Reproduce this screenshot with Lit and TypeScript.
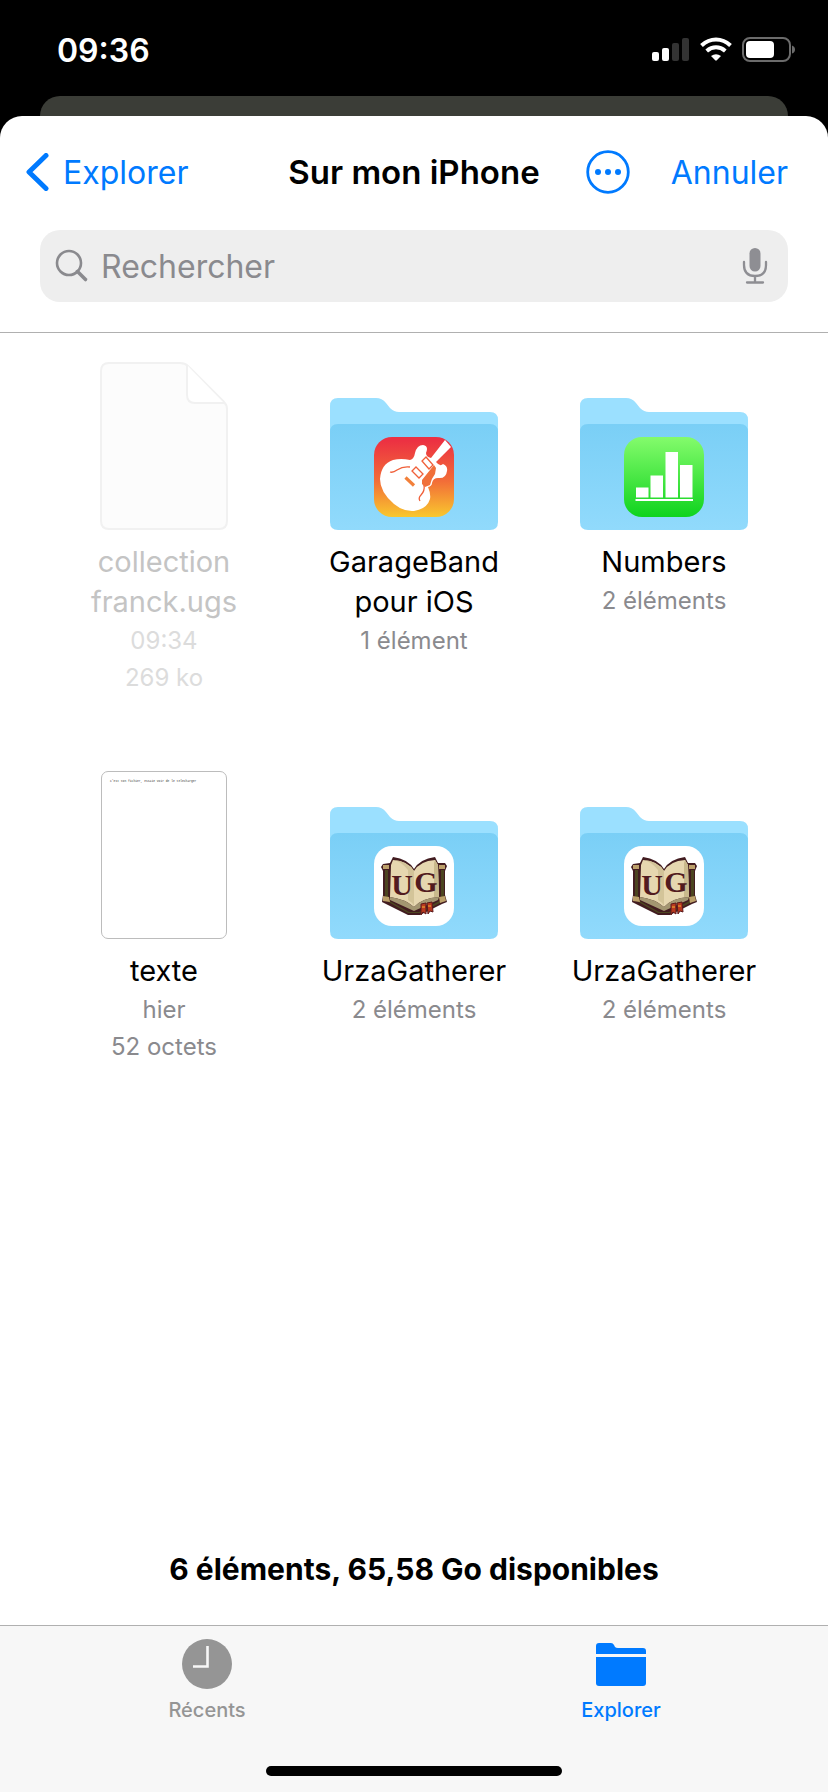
import { LitElement, html, css, svg, nothing } from "lit";
import { customElement } from "lit/decorators.js";

type Art = "document" | "preview" | "garageband" | "numbers" | "urza";

interface Entry {
  name: string;
  details: string[];
  art: Art;
  disabled?: boolean;
}

const entries: Entry[] = [
  { name: "collection franck.ugs", details: ["09:34", "269 ko"], art: "document", disabled: true },
  { name: "GarageBand pour iOS", details: ["1 élément"], art: "garageband" },
  { name: "Numbers", details: ["2 éléments"], art: "numbers" },
  { name: "texte", details: ["hier", "52 octets"], art: "preview" },
  { name: "UrzaGatherer", details: ["2 éléments"], art: "urza" },
  { name: "UrzaGatherer", details: ["2 éléments"], art: "urza" },
];

const garageband = svg`
  <rect width="80" height="80" rx="18" fill="url(#gb)"/>
  <g fill="#fff">
    <path d="M71 3 L77 10 L62 25 Q66 30 69 27 Q74 29 73 34 Q72 42 64 41 Q59 41 58 46 Q58 49 54 50 Q57 57 56 62 Q53 72 40 74 Q30 75 20 67 Q6 55 6 42 Q7 27 19 23 Q27 21 36 23 Q40 22 41 16 Q43 8 49 8 Q55 9 52 16 Q52 20 57 21 Z"/>
  </g>
  <g fill="none" stroke="#f0603a" stroke-width="1.3">
    <path d="M52 20 L59 28 L55 32 L48 24 Z"/>
    <path d="M42 30 L49 37 L45 41 L38 34 Z"/>
    <path d="M16 35 q3 1 7 -2 q6 -4 13 -3"/>
    <path d="M46 64 q-2 -3 1 -6 q4 -4 3 -10"/>
  </g>
  <path d="M60 28 L62 31 L61 37 Q57 42 56 48 L51 50 L48 47 L48 43 Z" fill="#f0703a"/>
  <path d="M31.500 40.500 L40 48.500" stroke="#f2803a" stroke-width="3.200" fill="none"/>`;

const numbers = svg`
  <rect width="80" height="80" rx="18" fill="url(#nb)"/>
  <g fill="#fff">
    <rect x="12" y="50.500" width="12.500" height="10"/>
    <rect x="26.500" y="38.500" width="12.500" height="22"/>
    <rect x="41.500" y="15" width="12.500" height="45.500"/>
    <rect x="56" y="28" width="12.500" height="32.500"/>
    <rect x="11.500" y="62" width="57.500" height="2"/>
  </g>`;

const urza = svg`
  <rect width="80" height="80" rx="18" fill="#fff"/>
  <path d="M9 18 L16 17 L19 11 Q34 13 40 23 Q46 13 61 11 L64 17 L71 17 L73 20 L71 25 L71 49 L73 56 L68 58 L46 69 L34 69 L12 58 L8 56 L9 49 L9 25 L7 21 Z" fill="#421c20"/>
  <path d="M11 24 L14 24 L14 54 L35 66 L45 66 L67 54 L67 24 L70 24 L70 52 L68 56 L46 67 L34 67 L11 54 Z" fill="#4c4520"/>
  <g fill="#bca06a">
    <path d="M9 19 h6 v4 h-6 Z M65 19 h6 v4 h-6 Z"/>
    <path d="M9 50 l6 1 l1 5 l-7 -1 Z M65 51 l6 -1 l1 5 l-6 2 Z"/>
  </g>
  <path d="M16 51 L17 19 L19 14 Q34 15 40 25 Q46 15 61 14 L64 19 L65 51 Q48 52 40 61 Q31 53 16 51 Z" fill="#e6d7b0"/>
  <path d="M19 14 Q34 15 40 25 L40 60 Q38 56 34 54 L34 24 Q27 15 19 14 Z" fill="#d3c499"/>
  <path d="M61 14 L64 19 L65 51 L60 51 L60 17 Z" fill="#c9b98c"/>
  <path d="M16 51 Q31 53 40 61 Q48 52 65 51 L64 54 L40 65 L16 54 Z" fill="#a39671"/>
  <g font-family="Liberation Serif, serif" font-weight="700" font-size="30" fill="#521b20" text-anchor="middle">
    <text x="28" y="49">U</text>
    <text x="52" y="46">G</text>
  </g>
  <path d="M47 58 l5 -1 l0 11 l-3 -2 l-2 3 Z M53 57 l5 -1 l1 10 l-3 -1 l-2 3 Z" fill="#b9391f" stroke="#5b1a1c"/>
  <path d="M48 61 h3 M54 60 h3" stroke="#e08a2c" stroke-width="1.500"/>`;

const appIcons = { garageband, numbers, urza };

const gradients = svg`
  <defs>
    <linearGradient id="front" x1="0" y1="0" x2="0" y2="1">
      <stop offset="0" stop-color="#7acff6"/><stop offset="1" stop-color="#91dafc"/>
    </linearGradient>
    <linearGradient id="gb" x1="0" y1="0" x2="0" y2="1">
      <stop offset="0.050" stop-color="#ec3142"/><stop offset="0.550" stop-color="#f26d38"/><stop offset="1" stop-color="#f9c82e"/>
    </linearGradient>
    <linearGradient id="nb" x1="0" y1="0" x2="0" y2="1">
      <stop offset="0" stop-color="#84fb6c"/><stop offset="1" stop-color="#0fd31e"/>
    </linearGradient>
  </defs>`;

@customElement("file-art")
class FileArt extends LitElement {
  static properties = { art: { type: String } };
  declare art: Art;

  static styles = css`
    :host { display: flex; align-items: flex-end; justify-content: center; height: 168px; }
    svg { display: block; }
    .page {
      box-sizing: border-box; width: 126px; height: 168px; padding: 7px 8px;
      border: 1px solid #bcbcbc; border-radius: 7px; text-align: left; overflow: hidden;
      font: 3px/6px "Liberation Mono", monospace; color: #333; white-space: nowrap;
    }
  `;

  render() {
    if (this.art === "preview") {
      return html`<div class="page">c'est ton fichier, essaie voir de le telecharger</div>`;
    }
    if (this.art === "document") {
      return html`<svg width="128" height="168" viewBox="0 0 128 168" aria-hidden="true">
        <path d="M9 1 H80 Q85 1 88 4 L124 40 Q127 43 127 47 V159 Q127 167 119 167 H9 Q1 167 1 159 V9 Q1 1 9 1 Z"
          fill="#fcfcfc" stroke="#f1f1f1" stroke-width="2"/>
        <path d="M87 3 V33 Q87 41 95 41 H124" fill="#fff" stroke="#f1f1f1" stroke-width="2"/>
      </svg>`;
    }
    return html`<svg width="168" height="132" viewBox="0 0 168 132" aria-hidden="true">
      ${gradients}
      <path d="M8 0 H46 Q52 0 56 5 L60 10 Q64 14 69 14 H160 Q168 14 168 22 V60 H0 V8 Q0 0 8 0 Z" fill="#9be0ff"/>
      <path d="M8 26 H160 Q168 26 168 34 V124 Q168 132 160 132 H8 Q0 132 0 124 V34 Q0 26 8 26 Z" fill="url(#front)"/>
      <g transform="translate(44 39)">${appIcons[this.art] ?? nothing}</g>
    </svg>`;
  }
}

@customElement("app-root")
class AppRoot extends LitElement {
  static styles = css`
    :host {
      display: flex; flex-direction: column; min-height: 100vh; background: #000;
      font-family: Inter, "Liberation Sans", sans-serif; color: #000;
    }
    * { box-sizing: border-box; }
    svg { display: block; flex: none; }
    a { color: #007aff; text-decoration: none; }
    button { border: 0; padding: 0; background: none; font: inherit; color: #007aff; }
    .status {
      display: flex; align-items: center; justify-content: space-between;
      height: 96px; padding: 4px 32px 0 57px; color: #fff;
      font-size: 32px; font-weight: 600;
    }
    .behind { height: 20px; margin: 0 40px; background: #3b3d37; border-radius: 20px 20px 0 0; }
    .sheet {
      flex: 1; display: flex; flex-direction: column;
      background: #fff; border-radius: 22px 22px 0 0; overflow: hidden;
    }
    .top { border-bottom: 1px solid #b0b0b0; padding-bottom: 30px; }
    .nav {
      display: grid; grid-template-columns: 1fr auto 1fr; align-items: center;
      height: 112px; margin-bottom: 2px; padding: 0 26px; font-size: 32px;
    }
    .back { display: flex; align-items: center; gap: 14px; justify-self: start; }
    .title { margin: 0; font-size: 33px; font-weight: 600; }
    .actions { display: flex; align-items: center; justify-content: space-between; padding: 0 14px 0 46px; }
    .search {
      display: flex; align-items: center; gap: 12px; height: 72px;
      margin: 0 40px; padding: 0 20px 0 15px; border-radius: 20px; background: #eeeeee;
    }
    .field {
      flex: 1; min-width: 0; border: 0; padding: 0; outline: 0; background: none;
      font: 32px Inter, "Liberation Sans", sans-serif; color: #000;
    }
    .field::placeholder { color: #8a8a8e; opacity: 1; }
    .field::-webkit-search-cancel-button { display: none; }
    .files {
      display: grid; grid-template-columns: repeat(3, 1fr); row-gap: 75px;
      list-style: none; margin: 0; padding: 29px 39px 0; text-align: center;
    }
    .name { margin: 12px auto 0; max-width: 200px; font-size: 29px; line-height: 40px; }
    .detail { font-size: 24px; line-height: 37px; color: #8a8a8e; }
    .off .name { color: #c4c4c4; }
    .off .detail { color: #dcdcdc; }
    .summary { margin: auto 0 0; padding-bottom: 36px; text-align: center; font-size: 30px; font-weight: 700; line-height: 40px; }
    .tabs {
      display: grid; grid-template-columns: 1fr 1fr; height: 120px; padding-top: 13px;
      border-top: 1px solid #b0b0b0; background: #f7f7f7;
    }
    .tab { display: flex; flex-direction: column; align-items: center; gap: 8px; font-size: 20px; line-height: 26px; font-weight: 500; color: #959595; }
    .tab.on { color: #007aff; }
    .home { display: flex; justify-content: center; background: #f7f7f7; height: 47px; padding-top: 21px; }
    .pill { width: 296px; height: 10px; border-radius: 5px; background: #000; }
    .icons { display: flex; align-items: center; gap: 10px; }
  `;

  render() {
    return html`
      <header class="status">
        <span>09:36</span>
        <div class="icons">
          <svg width="38" height="26" viewBox="0 0 38 26" aria-hidden="true">
            <rect x="0" y="15" width="7" height="9" rx="2" fill="#fff"/>
            <rect x="10" y="11" width="7" height="13" rx="2" fill="#fff"/>
            <rect x="20" y="6" width="7" height="18" rx="2" fill="#333"/>
            <rect x="30" y="1" width="7" height="23" rx="2" fill="#333"/>
          </svg>
          <svg width="32" height="26" viewBox="0 0 32 26" aria-hidden="true">
            <g fill="none" stroke="#fff" stroke-width="4">
              <path d="M1.500 8.500 Q8 2.500 16 2.500 T30.500 8.500"/>
              <path d="M6.700 14 Q11 10.300 16 10.300 T25.300 14"/>
            </g>
            <path d="M11 19 Q16 15.500 21 19 L16.800 23.300 Q16 24 15.200 23.300 Z" fill="#fff"/>
          </svg>
          <svg width="54" height="26" viewBox="0 0 54 26" aria-hidden="true">
            <rect x="1" y="1" width="47" height="23" rx="7" fill="none" stroke="#6b6b6b" stroke-width="2"/>
            <rect x="4" y="4" width="28" height="17" rx="4" fill="#fff"/>
            <path d="M50 8.500 Q53 9.500 53 12.500 T50 16.500 Z" fill="#6b6b6b"/>
          </svg>
        </div>
      </header>
      <div class="behind"></div>
      <main class="sheet">
        <div class="top">
          <nav class="nav">
            <a class="back" href="#explorer">
              <svg width="23" height="38" viewBox="0 0 23 38" aria-hidden="true">
                <path d="M20 2.500 L3 19 L20 35.500" fill="none" stroke="#007aff" stroke-width="5" stroke-linecap="round" stroke-linejoin="round"/>
              </svg>
              <span>Explorer</span>
            </a>
            <h1 class="title">Sur mon iPhone</h1>
            <div class="actions">
              <button type="button" aria-label="Plus">
                <svg width="44" height="44" viewBox="0 0 44 44" aria-hidden="true">
                  <circle cx="22" cy="22" r="20.300" fill="none" stroke="#007aff" stroke-width="2.800"/>
                  <g fill="#007aff"><circle cx="12" cy="22" r="3"/><circle cx="22" cy="22" r="3"/><circle cx="32" cy="22" r="3"/></g>
                </svg>
              </button>
              <button type="button">Annuler</button>
            </div>
          </nav>
          <div class="search">
            <svg width="34" height="34" viewBox="0 0 34 34" aria-hidden="true">
              <circle cx="14" cy="14" r="12" fill="none" stroke="#8a8a8e" stroke-width="2.600"/>
              <path d="M22.500 22.500 L30.500 30.500" stroke="#8a8a8e" stroke-width="3.600" stroke-linecap="round"/>
            </svg>
            <input class="field" type="search" placeholder="Rechercher" aria-label="Rechercher"/>
            <button type="button" aria-label="Dicter">
              <svg width="26" height="36" viewBox="0 0 26 36" aria-hidden="true">
                <rect x="7.500" y="0" width="11" height="23.500" rx="5.500" fill="#8e8e93"/>
                <path d="M2 14 V17 Q2 28 13 28 T24 17 V14 M13 28 V34 M5 34.500 H21" fill="none" stroke="#8e8e93" stroke-width="2.300" stroke-linecap="round"/>
              </svg>
            </button>
          </div>
        </div>
        <ul class="files">
          ${entries.map(
            (entry) => html`<li class=${entry.disabled ? "off" : ""}>
              <file-art .art=${entry.art}></file-art>
              <div class="name">${entry.name}</div>
              ${entry.details.map((line) => html`<div class="detail">${line}</div>`)}
            </li>`,
          )}
        </ul>
        <p class="summary">6 éléments, 65,58 Go disponibles</p>
      </main>
      <nav class="tabs">
        <a class="tab" href="#recents">
          <svg width="50" height="50" viewBox="0 0 50 50" aria-hidden="true">
            <circle cx="25" cy="25" r="25" fill="#959595"/>
            <path d="M25.500 7 V27.500 H11" fill="none" stroke="#f7f7f7" stroke-width="2.600"/>
          </svg>
          <span>Récents</span>
        </a>
        <a class="tab on" href="#explorer" aria-current="page">
          <svg width="50" height="50" viewBox="0 0 50 50" aria-hidden="true">
            <path d="M0 15 V7 Q0 4 3 4 H15 Q17 4 18 6 L19 8 Q20 9 22 9 H47 Q50 9 50 12 V15 Z" fill="#007aff"/>
            <path d="M0 18 H50 V44 Q50 47 47 47 H3 Q0 47 0 44 Z" fill="#007aff"/>
          </svg>
          <span>Explorer</span>
        </a>
      </nav>
      <div class="home"><div class="pill"></div></div>
    `;
  }
}
